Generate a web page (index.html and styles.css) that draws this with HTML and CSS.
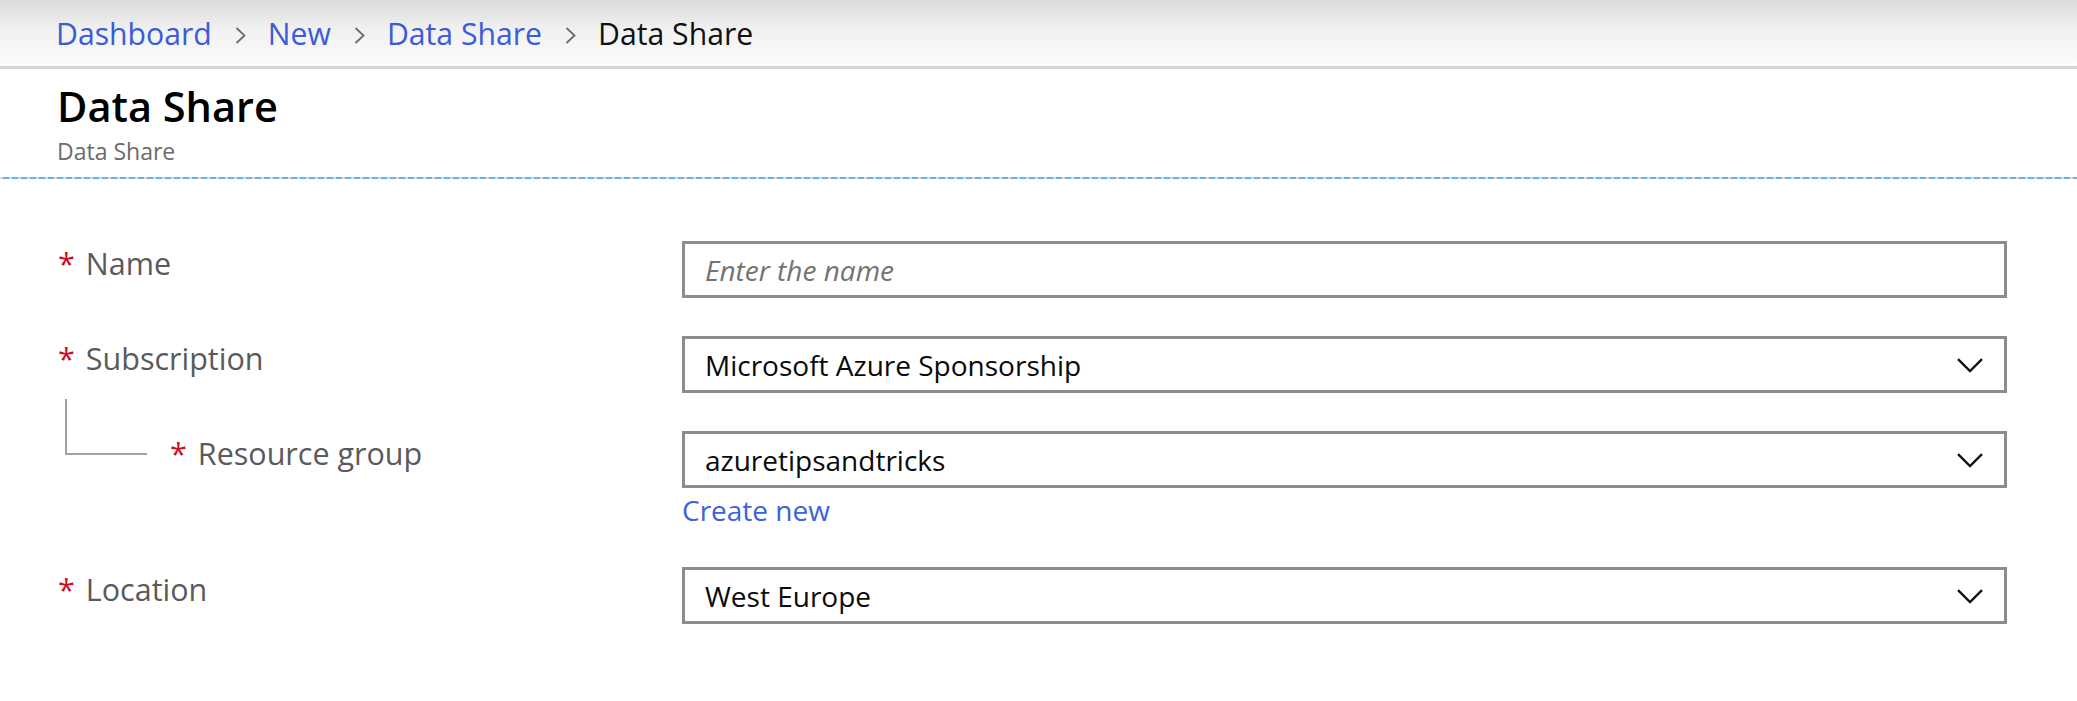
FILE: index.html
```html
<!DOCTYPE html>
<html lang="en">
<head>
<meta charset="utf-8">
<title>Data Share</title>
<link rel="stylesheet" href="styles.css">
</head>
<body>
<header class="topbar">
  <nav class="crumbs">
    <a class="crumb-link">Dashboard</a>
    <svg class="crumb-sep" width="11" height="17" viewBox="0 0 11 17"><polyline points="1.5,1 9.5,8.5 1.5,16" fill="none" stroke="#6b6b6b" stroke-width="1.8"/></svg>
    <a class="crumb-link">New</a>
    <svg class="crumb-sep" width="11" height="17" viewBox="0 0 11 17"><polyline points="1.5,1 9.5,8.5 1.5,16" fill="none" stroke="#6b6b6b" stroke-width="1.8"/></svg>
    <a class="crumb-link">Data Share</a>
    <svg class="crumb-sep" width="11" height="17" viewBox="0 0 11 17"><polyline points="1.5,1 9.5,8.5 1.5,16" fill="none" stroke="#6b6b6b" stroke-width="1.8"/></svg>
    <span class="crumb-current">Data Share</span>
  </nav>
</header>

<section class="blade-head">
  <h1 class="title">Data Share</h1>
  <div class="subtitle">Data Share</div>
</section>
<div class="dash-line"></div>

<main class="form">
  <div class="row">
    <div class="label"><span class="req">*</span><span>Name</span></div>
    <div class="field">
      <div class="box"><span class="placeholder">Enter the name</span></div>
    </div>
  </div>

  <div class="row">
    <div class="label"><span class="req">*</span><span>Subscription</span></div>
    <div class="field">
      <div class="box select"><span class="value">Microsoft Azure Sponsorship</span>
        <svg class="caret" width="26" height="15" viewBox="0 0 26 15"><polyline points="1,1.2 13,13 25,1.2" fill="none" stroke="#111" stroke-width="2.4"/></svg>
      </div>
    </div>
  </div>

  <div class="row row-rg">
    <div class="label label-child"><span class="tree"></span><span class="req">*</span><span>Resource group</span></div>
    <div class="field">
      <div class="box select"><span class="value">azuretipsandtricks</span>
        <svg class="caret" width="26" height="15" viewBox="0 0 26 15"><polyline points="1,1.2 13,13 25,1.2" fill="none" stroke="#111" stroke-width="2.4"/></svg>
      </div>
      <a class="create-link">Create new</a>
    </div>
  </div>

  <div class="row">
    <div class="label"><span class="req">*</span><span>Location</span></div>
    <div class="field">
      <div class="box select"><span class="value">West Europe</span>
        <svg class="caret" width="26" height="15" viewBox="0 0 26 15"><polyline points="1,1.2 13,13 25,1.2" fill="none" stroke="#111" stroke-width="2.4"/></svg>
      </div>
    </div>
  </div>
</main>
</body>
</html>
```

FILE: styles.css
```css
html, body {
  margin: 0;
  padding: 0;
  background: #ffffff;
  font-family: "Open Sans", "Noto Sans", "Liberation Sans", sans-serif;
}

.topbar {
  height: 64px;
  background: linear-gradient(to bottom, #dbdbdb 0%, #f1f1f1 45%, #fcfcfc 100%);
  border-bottom: 3px solid #d5d5d5;
  display: flex;
  align-items: center;
  padding: 2px 0 0 56px;
  box-sizing: content-box;
}

.crumbs {
  display: flex;
  align-items: center;
  font-size: 30.2px;
  line-height: 40px;
}

.crumb-link {
  color: #3b5bd8;
}

.crumb-current {
  color: #111111;
}

.crumb-sep {
  margin: 2px 22px 0 23px;
}

.blade-head {
  padding: 13px 0 12px 57px;
}

.title {
  margin: 0;
  font-size: 41.5px;
  line-height: 48px;
  font-weight: 600;
  color: #000000;
}

.subtitle {
  margin-top: 7px;
  font-size: 23px;
  line-height: 28px;
  color: #6b6b6b;
}

.dash-line {
  height: 2px;
  background: repeating-linear-gradient(to right, #d6d6d6 0px, #d6d6d6 3px, #5fb5ef 3px, #5fb5ef 9px);
}

.form {
  padding: 62px 70px 0 58px;
  display: flex;
  flex-direction: column;
  gap: 38px;
}

.row {
  display: flex;
  align-items: flex-start;
}

.row-rg + .row {
  margin-top: 2px;
}

.label {
  width: 624px;
  flex: none;
  display: flex;
  align-items: flex-start;
  margin-top: 2px;
  font-size: 30.5px;
  line-height: 40px;
  color: #5a5a5a;
}

.req {
  color: #c80f23;
  margin-right: 11px;
}

.label-child {
  padding-left: 7px;
  box-sizing: border-box;
}

.tree {
  width: 80px;
  height: 54px;
  margin-top: -34px;
  margin-right: 23px;
  border-left: 2px solid #a2a2a2;
  border-bottom: 2px solid #a2a2a2;
  flex: none;
}

.field {
  flex: 1;
  display: flex;
  flex-direction: column;
}

.box {
  height: 51px;
  border: 3px solid #8c8c8c;
  display: flex;
  align-items: center;
  justify-content: space-between;
  padding: 0 21px 0 20px;
  font-size: 28px;
  color: #000000;
}

.placeholder {
  font-style: italic;
  color: #737373;
}

.value {
  color: #0a0a0a;
}

.caret {
  margin-top: 2px;
}

.create-link {
  margin-top: 5px;
  font-size: 28px;
  line-height: 34px;
  color: #3b63dc;
}
```
